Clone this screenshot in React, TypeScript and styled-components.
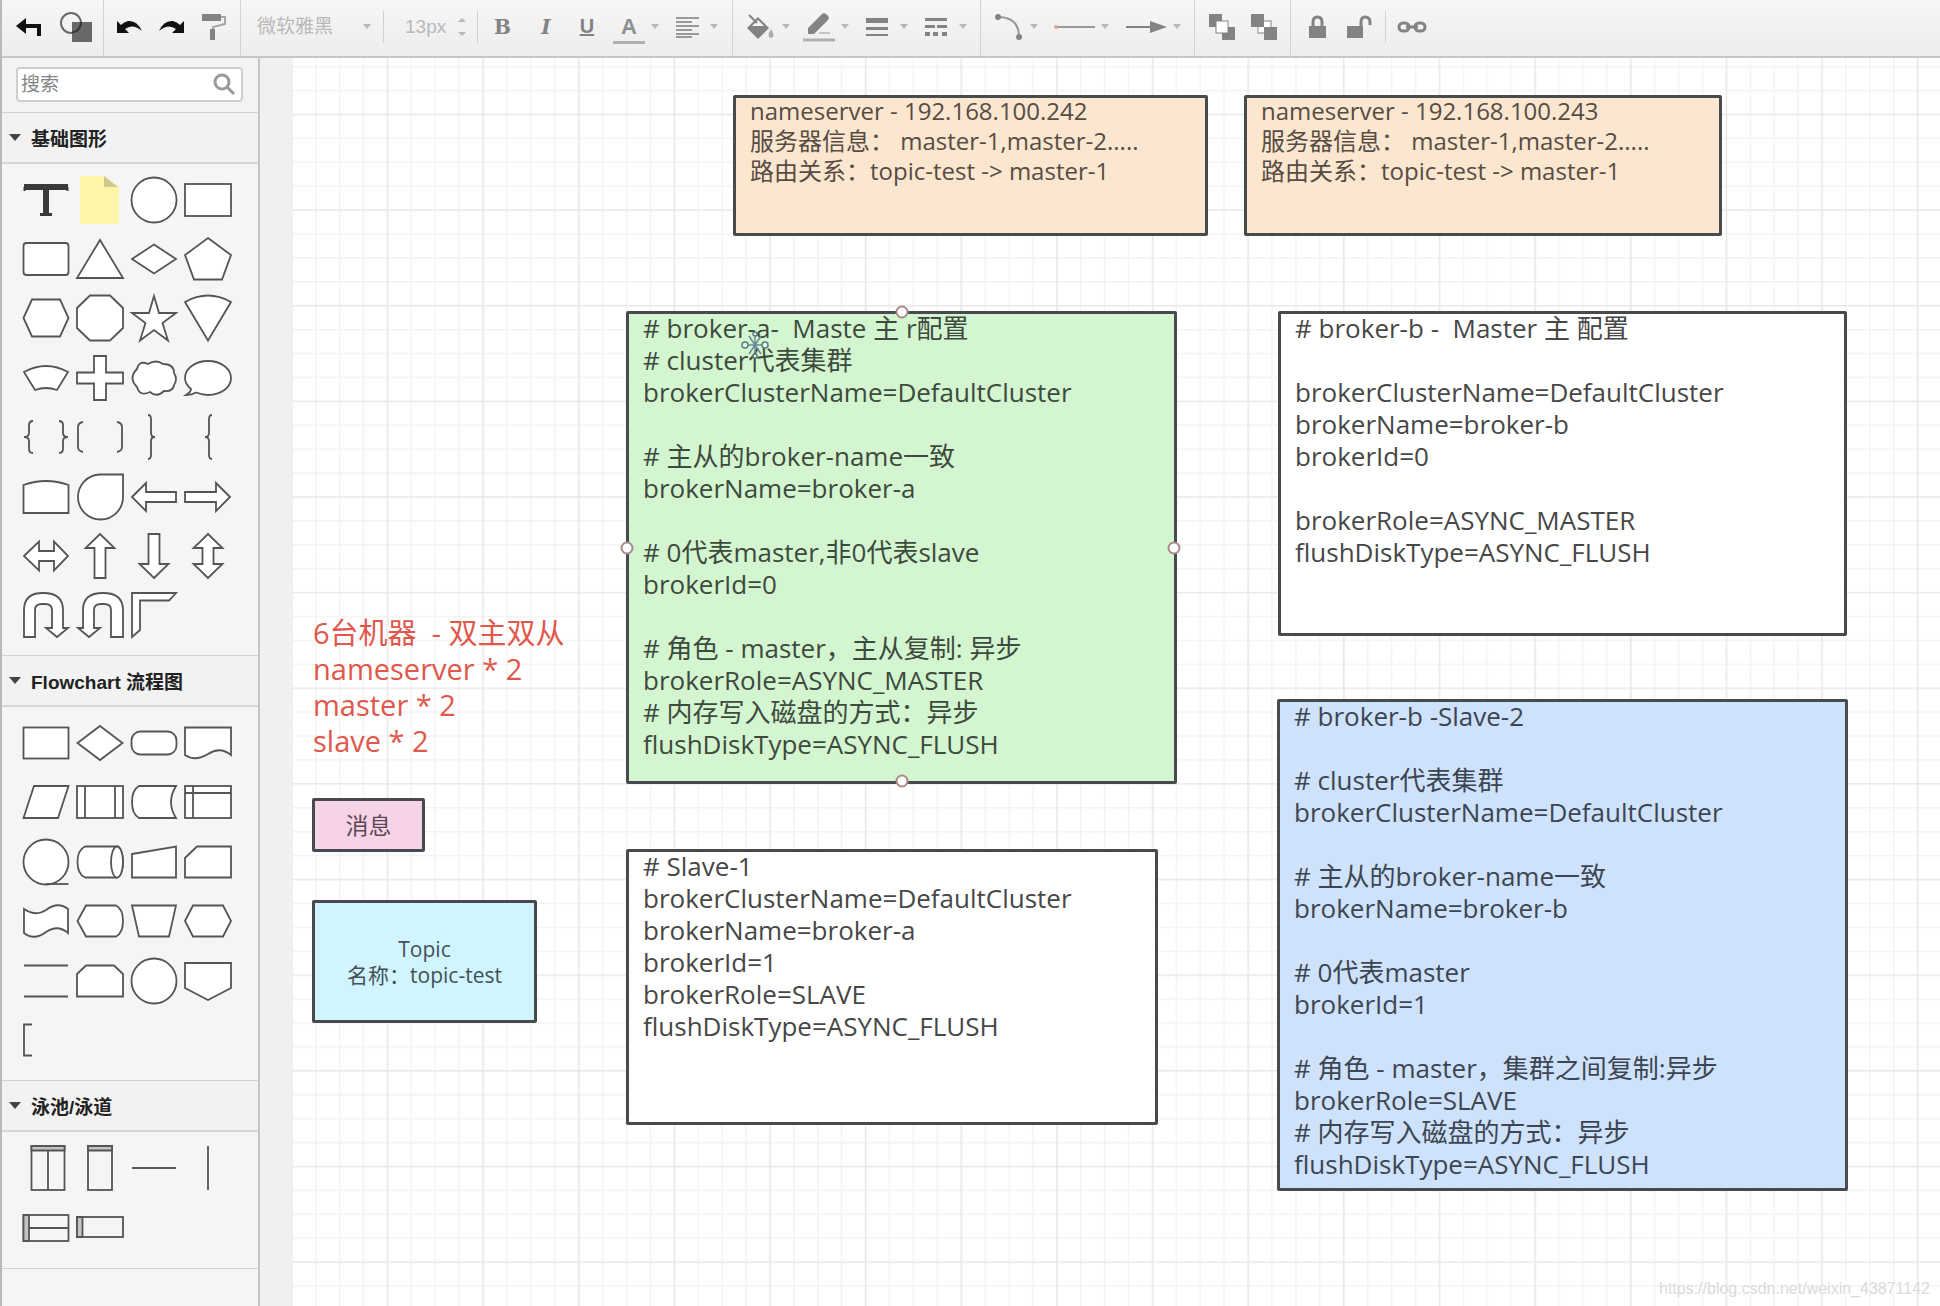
import React from "react";
import styled, { createGlobalStyle } from "styled-components";

const UI_FONT = '"Liberation Sans", "Noto Sans CJK SC", sans-serif';
const NODE_FONT = '"Open Sans", "Noto Sans CJK SC", sans-serif';

const GlobalStyle = createGlobalStyle`
  * { box-sizing: border-box; }
  body { margin: 0; background: #ffffff; font-family: ${UI_FONT}; }
  button { font: inherit; color: inherit; }
`;

const Page = styled.div`
  display: flex;
  flex-direction: column;
  height: 100vh;
  overflow: hidden;
  border-left: 2px solid #b9b9b9;
`;

/* ---------- toolbar ---------- */

const Toolbar = styled.header`
  display: flex;
  flex: none;
  height: 58px;
  background: linear-gradient(#f6f6f6, #ededed);
  border-bottom: 2px solid #c6c6c6;
  color: #838383;
`;

const Group = styled.div`
  display: flex;
  align-items: center;
  padding-bottom: 3px;
  border-right: 1px solid #d3d3d3;
  &:last-child { border-right: 0; }
`;

const Divider = styled.span`
  width: 1px;
  height: 32px;
  background: #d0d0d0;
`;

const ToolButton = styled.button<{ $w: number; $pl: number; $gap?: number; $dark?: boolean }>`
  display: flex;
  align-items: center;
  gap: ${(p) => p.$gap ?? 0}px;
  width: ${(p) => p.$w}px;
  height: 53px;
  padding: 0 0 0 ${(p) => p.$pl}px;
  border: 0;
  background: none;
  color: ${(p) => (p.$dark ? "#111111" : "#838383")};
`;

const Glyph = styled.svg`
  display: block;
  flex: none;
  overflow: visible;
  fill: currentColor;
`;

const LetterButton = styled.button<{ $w: number; $serif?: boolean }>`
  width: ${(p) => p.$w}px;
  height: 53px;
  padding: 0;
  border: 0;
  background: none;
  color: #838383;
  text-align: center;
  font: bold 20px ${(p) => (p.$serif ? '"DejaVu Serif", serif' : UI_FONT)};
`;

const ColorLetter = styled.span`
  width: 32px;
  margin-top: 4px;
  border-bottom: 3px solid #b0b0b0;
  font-size: 22px;
  line-height: 28px;
  font-weight: bold;
  text-align: center;
  color: #8f8f8f;
`;

const FontField = styled.label`
  display: flex;
  align-items: center;
  width: 142px;
  padding: 0 12px 0 16px;
`;

const FontSelect = styled.select`
  flex: 1;
  min-width: 0;
  padding: 0;
  border: 0;
  background: none;
  appearance: none;
  color: #b9b9b9;
  font: 19px ${UI_FONT};
`;

const SizeField = styled.label`
  display: flex;
  align-items: center;
  width: 93px;
  padding: 0 11px 0 21px;
`;

const SizeInput = styled.input`
  flex: 1;
  min-width: 0;
  padding: 0;
  border: 0;
  background: none;
  color: #b9b9b9;
  font: 19px ${UI_FONT};
`;

const Caret = () => (
  <Glyph width="8" height="5" viewBox="0 0 8 5">
    <path d="M0 0H8L4 5Z" fill="#b8b8b8" />
  </Glyph>
);

/* ---------- sidebar ---------- */

const Body = styled.div`
  display: flex;
  flex: 1;
  min-height: 0;
`;

const Sidebar = styled.aside`
  flex: none;
  width: 258px;
  background: #f5f5f5;
  border-right: 2px solid #c6c6c6;
`;

const SearchBar = styled.div`
  padding: 9px 15px 10px 14px;
  background: #f3f3f3;
  border-bottom: 1px solid #d2d2d2;
`;

const SearchBox = styled.label`
  display: flex;
  align-items: center;
  height: 35px;
  padding: 0 5px 0 3px;
  border: 2px solid #cfcfcf;
  border-radius: 4px;
  background: #ffffff;
`;

const SearchInput = styled.input`
  flex: 1;
  min-width: 0;
  padding: 0;
  border: 0;
  outline: 0;
  background: none;
  font: 19px ${UI_FONT};
  &::placeholder { color: #858585; opacity: 1; }
`;

const Section = styled.section`
  border-bottom: 1px solid #d2d2d2;
`;

const SectionTitle = styled.button`
  display: flex;
  align-items: center;
  gap: 10px;
  width: 100%;
  height: 51px;
  padding: 0 0 0 7px;
  border: 0;
  border-bottom: 2px solid #d6d6d6;
  background: #f2f2f2;
  color: #222222;
  font: bold 19px ${UI_FONT};
`;

const Palette = styled.div<{ $h: number }>`
  display: grid;
  grid-template-columns: repeat(4, 54px);
  grid-auto-rows: 1fr;
  height: ${(p) => p.$h}px;
  margin: 6px 0 10px 17px;
`;

const PaletteItem = styled.button`
  display: grid;
  place-items: center;
  padding: 0;
  border: 0;
  background: none;
`;

const Shape = styled.svg`
  display: block;
  overflow: visible;
  fill: #ffffff;
  stroke: #555555;
  stroke-width: 1.8;
`;

const basic: [string, React.ReactNode][] = [
  ["文本", <g stroke="#3a3a3a" fill="none"><path d="M-22 -13H22" strokeWidth="6" /><path d="M0 -13V15" strokeWidth="6" /><path d="M-21.5 -13V-9M21.5 -13V-9" strokeWidth="2" /><path d="M-6 14.5H6" strokeWidth="3" /></g>],
  ["便签", <g stroke="none"><path d="M-20 -24H5L19 -13V24H-20Z" fill="#fdf5a8" /><path d="M4 -24L18 -13H4Z" fill="#cfc98f" /></g>],
  ["圆形", <circle r="22.5" />],
  ["矩形", <rect x="-23" y="-16" width="46" height="32" />],
  ["圆角矩形", <rect x="-22.5" y="-16" width="45" height="32" rx="3" />],
  ["三角形", <path d="M0 -19L23 19H-23Z" />],
  ["菱形", <path d="M0 -14.5L22 0L0 14.5L-22 0Z" />],
  ["五边形", <path d="M0 -21L23 -4L14 20.5H-14L-23 -4Z" />],
  ["六边形", <path d="M-22.5 0L-14 -18.5H14L22.5 0L14 18.5H-14Z" />],
  ["八边形", <path d="M-23 -10L-10 -22.5H10L23 -10V10L10 22.5H-10L-23 10Z" />],
  ["星形", <path d="M0 -22L5 -5H22L8.5 5L14 22.5L0 12L-14 22.5L-8.5 5L-22 -5H-5Z" />],
  ["扇形", <path d="M-23 -16Q0 -29 23 -16L0 22.5Z" />],
  ["弧形", <path d="M-22 -6Q0 -18 22 -6L11 12Q0 8 -11 12Z" />],
  ["十字", <path d="M-6 -22H6V-5.5H23V5.5H6V22H-6V5.5H-23V-5.5H-6Z" />],
  ["云", <path d="M-17 -9Q-15 -18 -6 -14Q2 -19 9 -14Q20 -14 20 -5Q24 1 20 7Q19 14 10 13Q3 20 -4 14Q-14 19 -17 9Q-26 0 -17 -9Z" />],
  ["气泡", <path d="M-17 11Q-17 14 -22 17Q-16 17 -12 14.5Q-5 17 0 17C13 17 23 9.5 23 0S13 -17 0 -17S-23 -9.5 -23 0Q-23 6 -17 11Z" />],
  ["双大括号", <path fill="none" d="M-13 -16Q-17 -16 -17 -12V-4Q-17 0 -22 0Q-17 0 -17 4V12Q-17 16 -13 16M13 -16Q17 -16 17 -12V-4Q17 0 22 0Q17 0 17 4V12Q17 16 13 16" />],
  ["双中括号", <path fill="none" d="M-17 -15Q-22 -14 -22 -10V10Q-22 14 -17 15M17 -15Q22 -14 22 -10V10Q22 14 17 15" />],
  ["右大括号", <path fill="none" d="M-6 -22Q-3 -22 -3 -18V-4Q-3 0 1 0Q-3 0 -3 4V18Q-3 22 -6 22" />],
  ["左大括号", <path fill="none" d="M4 -22Q1 -22 1 -18V-4Q1 0 -3 0Q1 0 1 4V18Q1 22 4 22" />],
  ["拱形", <path d="M-22.5 16V-12Q0 -20 22.5 -12V16Z" />],
  ["水滴", <path d="M23 -22.5H0A22.5 22.5 0 1 0 23 0Z" />],
  ["左箭头", <path d="M-22 0L-8 -14V-5H22V5H-8V14Z" />],
  ["右箭头", <path d="M22 0L8 -14V-5H-23V5H8V14Z" />],
  ["左右箭头", <path d="M-22 0L-7 -14.5V-5H8V-14.5L22 0L8 14.5V5H-7V14.5Z" />],
  ["上箭头", <path d="M0 -22L14.5 -8H5.5V22H-5.5V-8H-14.5Z" />],
  ["下箭头", <path d="M0 22L14.5 8H5.5V-22H-5.5V8H-14.5Z" />],
  ["上下箭头", <path d="M0 -22L14.5 -8H5.5V8H14.5L0 22L-14.5 8H-5.5V-8H-14.5Z" />],
  ["右回转", <path d="M-22 22V-5Q-22 -22 -3 -22Q17 -22 17 -5V13H22L11 22L0 13H6V-5Q6 -11 -1 -11H-4Q-11 -11 -11 -5V22Z" />],
  ["左回转", <path d="M23 22V-5Q23 -22 3 -22Q-17 -22 -17 -5V13H-22L-11 22L0 13H-6V-5Q-6 -11 1 -11H4Q11 -11 11 -5V22Z" />],
  ["拐角", <path d="M-22 -22H22L15 -14.5H-14V15L-22 22Z" />],
];

const flow: [string, React.ReactNode][] = [
  ["流程", <rect x="-22.5" y="-15.5" width="45" height="31" />],
  ["判定", <path d="M0 -17L22.5 0L0 17L-22.5 0Z" />],
  ["开始结束", <rect x="-22.5" y="-11.5" width="45" height="23" rx="9" />],
  ["文档", <path d="M-23 -15.5H23V12Q12 3 0 11Q-13 19 -23 12Z" />],
  ["数据", <path d="M-12 -16H22.5L12 16H-22.5Z" />],
  ["子流程", <g><rect x="-23" y="-16" width="46" height="32" /><path d="M-15 -16V16M15 -16V16" /></g>],
  ["外部数据", <path d="M-15 -16H22Q12 0 22 16H-15Q-22 12 -22 0T-15 -16Z" />],
  ["内部存储", <g><rect x="-23" y="-16" width="46" height="32" /><path d="M-15 -16V16M-23 -9H23" /></g>],
  ["队列数据", <g><circle r="22.5" /><path d="M0 22H22.5" /></g>],
  ["直接数据", <g><path d="M-15 -15.5H17A6 15.5 0 0 1 17 15.5H-15Q-22.5 12 -22.5 0T-15 -15.5Z" /><ellipse cx="17" rx="6" ry="15.5" /></g>],
  ["手动输入", <path d="M-22 -8L22 -15.5V15.5H-22Z" />],
  ["卡片", <path d="M-11 -15.5H23V15.5H-23V-4Z" />],
  ["条带", <path d="M-22 -12Q-10 -4 0 -11Q12 -20 22 -12V12Q12 3 0 11Q-12 20 -22 12Z" />],
  ["展示", <path d="M-22.5 0L-14 -15.5H16Q23 -12 23 0T16 15.5H-14Z" />],
  ["手动操作", <path d="M-22 -15.5H22L15 15.5H-15Z" />],
  ["预备", <path d="M-23 0L-15 -15.5H15L23 0L15 15.5H-15Z" />],
  ["并行模式", <path d="M-22 -15.5H22M-22 15.5H22" />],
  ["循环限值", <path d="M-23 -7L-14 -15.5H14L23 -7V15.5H-23Z" />],
  ["页面内引用", <circle r="22.5" />],
  ["跨页引用", <path d="M-23 -18H23V7L0 19L-23 7Z" />],
  ["注释", <path fill="none" d="M-14 -15.5H-22V15.5H-14" />],
];

const lanes: [string, React.ReactNode][] = [
  ["垂直泳池", <g fill="none"><rect x="-14.5" y="-22" width="33" height="44" /><path d="M-14.5 -22H18.5V-17.5H-14.5Z" fill="#c4c4c4" /><path d="M2 -17.5V22" /></g>],
  ["垂直泳道", <g fill="none"><rect x="-12" y="-22" width="24" height="44" /><path d="M-12 -22H12V-17.5H-12Z" fill="#c4c4c4" /></g>],
  ["水平分隔", <path d="M-22 0H22" />],
  ["垂直分隔", <path d="M0 -22V22" />],
  ["水平泳池", <g fill="none"><rect x="-22.5" y="-13" width="45" height="26" /><path d="M-22.5 -13H-17V13H-22.5Z" fill="#c4c4c4" /><path d="M-17 0H22.5" /></g>],
  ["水平泳道", <g fill="none"><rect x="-23" y="-11" width="46" height="20" /><path d="M-23 -11H-17.5V9H-23Z" fill="#c4c4c4" /></g>],
];

const PaletteSection = ({ title, items, height }: { title: string; items: [string, React.ReactNode][]; height: number }) => (
  <Section>
    <SectionTitle type="button">
      <Glyph width="12" height="8" viewBox="0 0 12 8"><path d="M0 0H12L6 7Z" fill="#444444" /></Glyph>
      {title}
    </SectionTitle>
    <Palette $h={height}>
      {items.map(([name, art]) => (
        <PaletteItem key={name} type="button" aria-label={name}>
          <Shape width="48" height="48" viewBox="-24 -24 48 48">{art}</Shape>
        </PaletteItem>
      ))}
    </Palette>
  </Section>
);

/* ---------- canvas ---------- */

const Gutter = styled.div`
  flex: none;
  width: 32px;
  background: #f0f0f0;
`;

const Canvas = styled.main`
  position: relative;
  flex: 1;
  min-width: 0;
  overflow: hidden;
  background: #ffffff;
`;

const GridPaper = styled.svg`
  position: absolute;
  inset: 0;
  width: 100%;
  height: 100%;
`;

const Node = styled.div<{ $x: number; $y: number; $w: number; $h: number; $fill: string; $size?: number; $line?: number; $ink?: string; $center?: boolean }>`
  position: absolute;
  left: ${(p) => p.$x}px;
  top: ${(p) => p.$y}px;
  width: ${(p) => p.$w}px;
  height: ${(p) => p.$h}px;
  border: 3px solid #474b4d;
  border-radius: 2px;
  background: ${(p) => p.$fill};
  color: ${(p) => p.$ink ?? "#474747"};
  font: ${(p) => p.$size ?? 26}px/${(p) => p.$line ?? 32}px ${NODE_FONT};
  white-space: pre;
  ${(p) =>
    p.$center
      ? "display: grid; place-content: center; text-align: center;"
      : "padding-left: 14px;"}
`;

const NodeText = styled.p`
  margin: -2px 0 0;
`;

const Note = styled.div<{ $x: number; $y: number }>`
  position: absolute;
  left: ${(p) => p.$x}px;
  top: ${(p) => p.$y}px;
  color: #e0574c;
  font: 29px/36px ${NODE_FONT};
  white-space: pre;
`;

const Handle = styled.span<{ $x: string; $y: string }>`
  position: absolute;
  left: ${(p) => p.$x};
  top: ${(p) => p.$y};
  width: 13px;
  height: 13px;
  border: 2px solid #a98a8a;
  border-radius: 50%;
  background: #ffffff;
  transform: translate(-50%, -50%);
`;

const MoveCursor = styled.svg`
  position: absolute;
  left: 112px;
  top: 16px;
`;

const Watermark = styled.span`
  position: absolute;
  right: 10px;
  bottom: 7px;
  color: #dadada;
  font: 16px/20px ${UI_FONT};
  text-shadow: 1px 1px 0 #ffffff;
`;

const MASTER_A = `# broker-a-  Maste 主 r配置
# cluster代表集群
brokerClusterName=DefaultCluster

# 主从的broker-name一致
brokerName=broker-a

# 0代表master,非0代表slave
brokerId=0

# 角色 - master，主从复制: 异步
brokerRole=ASYNC_MASTER
# 内存写入磁盘的方式：异步
flushDiskType=ASYNC_FLUSH`;

const SLAVE_A = `# Slave-1
brokerClusterName=DefaultCluster
brokerName=broker-a
brokerId=1
brokerRole=SLAVE
flushDiskType=ASYNC_FLUSH`;

const MASTER_B = `# broker-b -  Master 主 配置

brokerClusterName=DefaultCluster
brokerName=broker-b
brokerId=0

brokerRole=ASYNC_MASTER
flushDiskType=ASYNC_FLUSH`;

const SLAVE_B = `# broker-b -Slave-2

# cluster代表集群
brokerClusterName=DefaultCluster

# 主从的broker-name一致
brokerName=broker-b

# 0代表master
brokerId=1

# 角色 - master，集群之间复制:异步
brokerRole=SLAVE
# 内存写入磁盘的方式：异步
flushDiskType=ASYNC_FLUSH`;

const nameserver = (ip: string) => `nameserver - ${ip}
服务器信息： master-1,master-2.....
路由关系：topic-test -> master-1`;

const NOTE = `6台机器  - 双主双从
nameserver * 2
master * 2
slave * 2`;

export default function App() {
  return (
    <Page>
      <GlobalStyle />
      <Toolbar>
        <Group>
          <ToolButton $w={51} $pl={14} $dark aria-label="返回">
            <Glyph width="25" height="18" viewBox="0 0 25 18"><path d="M0 8L10 0V6H25V18H21V10H10V16Z" /></Glyph>
          </ToolButton>
          <ToolButton $w={50} $pl={7} aria-label="图形">
            <Glyph width="32" height="30" viewBox="0 0 32 30">
              <rect x="12" y="10" width="20" height="20" fill="#686868" />
              <circle cx="11" cy="11" r="10" fill="none" stroke="#686868" strokeWidth="2" />
              <path d="M12 20.5A10 10 0 0 0 21 10" fill="none" stroke="#333333" strokeWidth="2" />
            </Glyph>
          </ToolButton>
        </Group>
        <Group>
          <ToolButton $w={46} $pl={13} $dark aria-label="撤销">
            <Glyph width="25" height="14" viewBox="0 0 25 14"><path d="M0 1V13H12L8 9Q16 3 25 11Q20 0 11 1Q7 2 4 5Z" /></Glyph>
          </ToolButton>
          <ToolButton $w={42} $pl={9} $dark aria-label="恢复">
            <Glyph width="25" height="14" viewBox="0 0 25 14"><path d="M25 1V13H13L17 9Q9 3 0 11Q5 0 14 1Q18 2 21 5Z" /></Glyph>
          </ToolButton>
          <ToolButton $w={48} $pl={10} aria-label="格式刷">
            <Glyph width="24" height="26" viewBox="0 0 24 26">
              <rect width="19" height="7" />
              <path d="M19 3H23V10L11 13V16" fill="none" stroke="#a5a5a5" strokeWidth="2" />
              <rect x="8" y="15" width="5" height="11" />
            </Glyph>
          </ToolButton>
        </Group>
        <Group>
          <FontField>
            <FontSelect aria-label="字体" defaultValue="yahei">
              <option value="yahei">微软雅黑</option>
            </FontSelect>
            <Caret />
          </FontField>
          <Divider />
          <SizeField>
            <SizeInput aria-label="字号" defaultValue="13px" />
            <Glyph width="8" height="18" viewBox="0 0 8 18"><path d="M0 4L4 0L8 4ZM0 14H8L4 18Z" fill="#b8b8b8" /></Glyph>
          </SizeField>
          <Divider />
          <LetterButton $w={49} $serif aria-label="粗体">B</LetterButton>
          <LetterButton $w={38} $serif aria-label="斜体"><i>I</i></LetterButton>
          <LetterButton $w={44} aria-label="下划线"><u>U</u></LetterButton>
          <ToolButton $w={56} $pl={4} $gap={6} aria-label="字体颜色">
            <ColorLetter>A</ColorLetter>
            <Caret />
          </ToolButton>
          <ToolButton $w={67} $pl={11} $gap={11} aria-label="对齐">
            <Glyph width="23" height="20" viewBox="0 0 23 20"><path d="M0 1H23M0 5H16M0 9H23M0 13H16M0 17H23M0 20H16" stroke="#9a9a9a" strokeWidth="2" /></Glyph>
            <Caret />
          </ToolButton>
        </Group>
        <Group>
          <ToolButton $w={62} $pl={14} $gap={7} aria-label="填充颜色">
            <Glyph width="28" height="24" viewBox="0 0 28 24">
              <path d="M11 2L22 13L11 24L0 13Z" />
              <path d="M11 5L17 11H5Z" fill="#f3f3f3" />
              <path d="M2 0L10 8" stroke="#838383" strokeWidth="2" />
              <path d="M24 14Q29 22 24 23Q19 22 24 14Z" fill="#acacac" />
            </Glyph>
            <Caret />
          </ToolButton>
          <ToolButton $w={60} $pl={8} $gap={6} aria-label="线条颜色">
            <Glyph width="32" height="26" viewBox="0 0 32 26">
              <path d="M5 20V14L19 0Q22 -2 24 1Q27 3 25 6L11 20Z" />
              <path d="M16 19H27" stroke="#c4c4c4" strokeWidth="2" />
              <path d="M0 26H32" stroke="#b0b0b0" strokeWidth="3" />
            </Glyph>
            <Caret />
          </ToolButton>
          <ToolButton $w={60} $pl={11} $gap={12} aria-label="线条宽度">
            <Glyph width="22" height="18" viewBox="0 0 22 18"><path d="M0 0H22V5H0ZM0 9H22V12H0ZM0 16H22V18H0Z" /></Glyph>
            <Caret />
          </ToolButton>
          <ToolButton $w={65} $pl={10} $gap={12} aria-label="线条样式">
            <Glyph width="22" height="18" viewBox="0 0 22 18"><path d="M0 0H22V3H0ZM0 7H10V10H0ZM12 7H22V10H12ZM0 14H5V18H0ZM8 14H13V18H8ZM17 14H22V18H17Z" /></Glyph>
            <Caret />
          </ToolButton>
        </Group>
        <Group>
          <ToolButton $w={63} $pl={14} $gap={7} aria-label="连线类型">
            <Glyph width="28" height="26" viewBox="0 0 28 26"><path d="M3 3Q24 3 24 23" fill="none" stroke="#999999" strokeWidth="2" /><circle cx="3" cy="3" r="3" /><circle cx="24" cy="23" r="3" /></Glyph>
            <Caret />
          </ToolButton>
          <ToolButton $w={71} $pl={11} $gap={6} aria-label="起点">
            <Glyph width="40" height="4" viewBox="0 0 40 4"><path d="M0 2H40" stroke="#999999" strokeWidth="2" /><circle cx="1" cy="2" r="2" fill="#e8a0a0" /></Glyph>
            <Caret />
          </ToolButton>
          <ToolButton $w={79} $pl={11} $gap={6} aria-label="终点">
            <Glyph width="41" height="12" viewBox="0 0 41 12"><path d="M0 6H26" stroke="#838383" strokeWidth="2" /><path d="M24 0L41 6L24 12Z" /></Glyph>
            <Caret />
          </ToolButton>
        </Group>
        <Group>
          <ToolButton $w={48} $pl={14} aria-label="置于顶层">
            <Glyph width="26" height="26" viewBox="0 0 26 26"><path d="M0 0H13V13H0ZM13 13H26V26H13Z" /><rect x="7" y="7" width="12" height="12" fill="#ffffff" stroke="#838383" strokeWidth="1" /></Glyph>
          </ToolButton>
          <ToolButton $w={47} $pl={8} aria-label="置于底层">
            <Glyph width="26" height="26" viewBox="0 0 26 26"><rect x="7" y="7" width="13" height="12" fill="#ffffff" stroke="#838383" strokeWidth="1" /><path d="M0 0H13V13H0ZM13 13H26V26H13Z" /></Glyph>
          </ToolButton>
        </Group>
        <Group>
          <ToolButton $w={46} $pl={18} aria-label="锁定">
            <Glyph width="18" height="22" viewBox="0 0 18 22"><rect y="10" width="17" height="12" /><path d="M4 11V6Q4 1 8.5 1Q13 1 13 6V11" fill="none" stroke="#838383" strokeWidth="3" /></Glyph>
          </ToolButton>
          <ToolButton $w={48} $pl={10} aria-label="解锁">
            <Glyph width="24" height="22" viewBox="0 0 24 22"><rect y="10" width="16" height="12" /><path d="M14 11V6Q14 1 18 1Q23 1 23 6V9" fill="none" stroke="#838383" strokeWidth="3" /></Glyph>
          </ToolButton>
          <Divider />
          <ToolButton $w={50} $pl={11} aria-label="链接">
            <Glyph width="30" height="12" viewBox="0 0 30 12"><g fill="none" stroke="#838383" strokeWidth="3"><rect x="2" y="2" width="10" height="8" rx="4" /><rect x="18" y="2" width="10" height="8" rx="4" /><path d="M9 6H21" /></g></Glyph>
          </ToolButton>
        </Group>
      </Toolbar>

      <Body>
        <Sidebar>
          <SearchBar>
            <SearchBox>
              <SearchInput placeholder="搜索" aria-label="搜索" />
              <Glyph width="22" height="22" viewBox="0 0 22 22"><circle cx="8" cy="8" r="7" fill="none" stroke="#9a9a9a" strokeWidth="3" /><path d="M13 13L20 20" stroke="#9a9a9a" strokeWidth="3" /></Glyph>
            </SearchBox>
          </SearchBar>
          <PaletteSection title="基础图形" items={basic} height={475} />
          <PaletteSection title="Flowchart 流程图" items={flow} height={357} />
          <PaletteSection title="泳池/泳道" items={lanes} height={120} />
        </Sidebar>
        <Gutter />
        <Canvas>
          <GridPaper aria-hidden="true">
            <defs>
              <pattern id="grid" x="-1" y="-40" width="95.64" height="95.64" patternUnits="userSpaceOnUse">
                <path d="M24.6 0V96M48.5 0V96M72.4 0V96M0 24.6H96M0 48.5H96M0 72.4H96" stroke="#f3f3f3" strokeWidth="1.5" fill="none" />
                <path d="M0.8 0V96M0 0.8H96" stroke="#e8e8e8" strokeWidth="1.6" fill="none" />
              </pattern>
            </defs>
            <rect width="100%" height="100%" fill="url(#grid)" />
          </GridPaper>

          <Node $x={441} $y={37} $w={475} $h={141} $fill="#fbe6cf" $size={24} $line={30} $ink="#574c44">
            <NodeText>{nameserver("192.168.100.242")}</NodeText>
          </Node>
          <Node $x={952} $y={37} $w={478} $h={141} $fill="#fbe6cf" $size={24} $line={30} $ink="#574c44">
            <NodeText>{nameserver("192.168.100.243")}</NodeText>
          </Node>

          <Node $x={334} $y={253} $w={551} $h={473} $fill="#d3f5d0" $ink="#3d4a3d">
            <NodeText>{MASTER_A}</NodeText>
            <Handle $x="50%" $y="-2px" />
            <Handle $x="-2px" $y="50%" />
            <Handle $x="100%" $y="50%" />
            <Handle $x="50%" $y="100%" />
            <MoveCursor width="28" height="30" viewBox="-14 -15 28 30" aria-hidden="true">
              <path d="M-6 -9L6 9M6 -9L-6 9M0 -12V12M-9 0H9" stroke="#6b8a98" strokeWidth="1.5" />
              <g fill="#e9f6ee" stroke="#5b7f7c" strokeWidth="1.5">
                <circle cx="-10" r="3" /><circle cx="10" r="3" /><circle cy="-11" r="2" /><circle cy="11" r="2" />
              </g>
            </MoveCursor>
          </Node>
          <Node $x={334} $y={791} $w={532} $h={276} $fill="#ffffff">
            <NodeText>{SLAVE_A}</NodeText>
          </Node>
          <Node $x={986} $y={253} $w={569} $h={325} $fill="#ffffff">
            <NodeText>{MASTER_B}</NodeText>
          </Node>
          <Node $x={985} $y={641} $w={571} $h={492} $fill="#cfe2fb" $ink="#3c4653">
            <NodeText>{SLAVE_B}</NodeText>
          </Node>

          <Note $x={21} $y={557}>{NOTE}</Note>
          <Node $x={20} $y={740} $w={113} $h={54} $fill="#f6d3e6" $size={23} $line={26} $ink="#5a4654" $center>消息</Node>
          <Node $x={20} $y={842} $w={225} $h={123} $fill="#d1f5ff" $size={21} $line={26} $ink="#435157" $center>{"Topic\n名称：topic-test"}</Node>
          <Watermark>https://blog.csdn.net/weixin_43871142</Watermark>
        </Canvas>
      </Body>
    </Page>
  );
}
